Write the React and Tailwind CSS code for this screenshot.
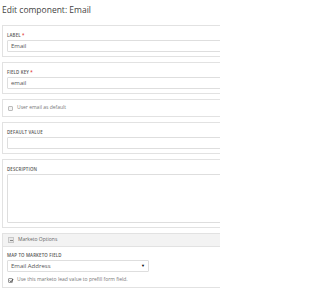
import React from "react";

function Panel({ children, className = "" }) {
  return (
    <div className={"ml-[2px] w-[240px] border border-[#e2e2e2] bg-white " + className}>
      {children}
    </div>
  );
}

function Label({ children, req }) {
  return (
    <div className="h-[6px] text-[4.4px] leading-[6px] font-semibold uppercase tracking-[0.15px] text-[#555]">
      {children}
      {req && <span className="text-[#e03030]"> *</span>}
    </div>
  );
}

function Field({ label, req, value }) {
  return (
    <Panel className="px-[4px] pt-[6px] pb-[4px]">
      <Label req={req}>{label}</Label>
      <div className="mt-[2px] flex h-[12px] items-center rounded-[1px] border border-[#dedede] bg-white px-[3px] text-[6px] text-[#555]">
        {value}
      </div>
    </Panel>
  );
}

export default function App() {
  return (
    <div
      className="h-[294px] w-[220px] overflow-hidden bg-white"
      style={{ fontFamily: '"Open Sans", "Noto Sans", sans-serif' }}
    >
      <div className="flex h-[25px] items-start pl-[2px] pt-[4px] text-[8.5px] leading-[12px] text-[#444]">
        Edit component: Email
      </div>
      <div className="flex flex-col gap-[5px]">
        <Field label="Label" req value="Email" />
        <Field label="Field key" req value="email" />
        <Panel className="flex h-[18px] items-center px-[5px]">
          <div className="h-[5px] w-[5px] rounded-[1px] border border-[#bbb] bg-[#f4f4f4]" />
          <span className="ml-[4px] text-[5px] text-[#777]">User email as default</span>
        </Panel>
        <Field label="Default value" value="" />
        <Panel className="px-[4px] pt-[6px] pb-[4px]">
          <Label>Description</Label>
          <div className="mt-[2px] h-[49px] rounded-[1px] border border-[#dedede] bg-white" />
        </Panel>
        <Panel>
          <div className="flex h-[13px] items-center border-b border-[#e2e2e2] bg-[#f3f3f3] px-[5px]">
            <div className="flex h-[6px] w-[6px] items-center justify-center border border-[#c8c8c8] bg-[#e8e8e8]">
              <div className="h-[1px] w-[3px] bg-[#888]" />
            </div>
            <span className="ml-[4px] text-[5px] text-[#666]">Marketo Options</span>
          </div>
          <div className="px-[4px] pt-[5px] pb-[3px]">
            <Label>Map to Marketo field</Label>
            <div className="mt-[2px] flex h-[12px] w-[142px] items-center justify-between rounded-[1px] border border-[#dedede] bg-white px-[3px] text-[6px] text-[#555]">
              <span>Email Address</span>
              <span className="text-[4px] text-black">▼</span>
            </div>
            <div className="mt-[4px] flex h-[8px] items-center pl-[1px]">
              <div className="relative h-[5px] w-[5px] rounded-[1px] border border-[#999] bg-[#f4f4f4]">
                <svg viewBox="0 0 5 5" className="absolute left-[-0.5px] top-[-0.5px] h-[5px] w-[5px]">
                  <path d="M0.8 2.6 L2 3.8 L4.2 1" fill="none" stroke="#333" strokeWidth="0.9" />
                </svg>
              </div>
              <span className="ml-[4px] text-[5px] text-[#777]">
                Use this marketo lead value to prefill form field.
              </span>
            </div>
          </div>
        </Panel>
      </div>
    </div>
  );
}
